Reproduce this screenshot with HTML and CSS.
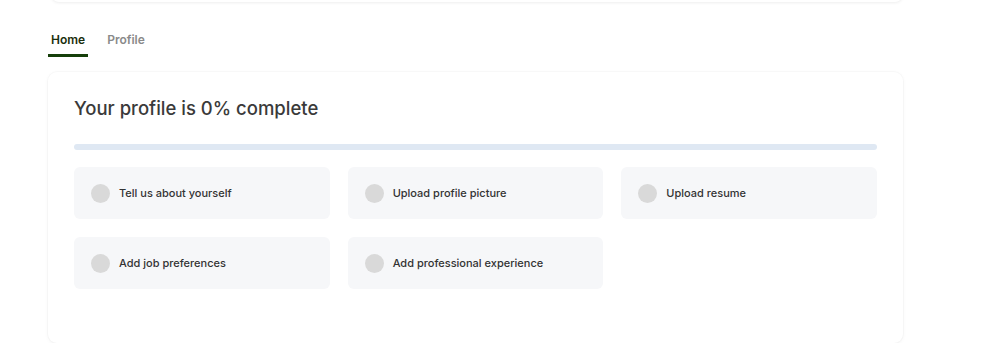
FILE: index.html
```html
<!DOCTYPE html>
<html>
<head>
<meta charset="utf-8">
<link rel="stylesheet" href="styles.css">
</head>
<body>
<div class="page">
  <div class="top-card"></div>
  <nav class="tabs">
    <a class="tab active">Home</a>
    <a class="tab">Profile</a>
  </nav>
  <section class="card">
    <h1 class="title">Your profile is 0% complete</h1>
    <div class="progress"><div class="progress-fill" style="width:0%"></div></div>
    <div class="tasks">
      <div class="task"><span class="dot"></span><span class="label">Tell us about yourself</span></div>
      <div class="task"><span class="dot"></span><span class="label">Upload profile picture</span></div>
      <div class="task"><span class="dot"></span><span class="label">Upload resume</span></div>
      <div class="task"><span class="dot"></span><span class="label">Add job preferences</span></div>
      <div class="task"><span class="dot"></span><span class="label">Add professional experience</span></div>
    </div>
  </section>
</div>
</body>
</html>
```
FILE: styles.css
```css
* { box-sizing: border-box; }
html, body { margin: 0; padding: 0; background: #fff; }
body { font-family: Inter, "Noto Sans", "Liberation Sans", sans-serif; color: #333; }
.page { width: 855px; margin-left: 48px; }
.top-card {
  height: 10px;
  margin-top: -8px;
  margin-left: 3px;
  border-radius: 0 0 8px 8px;
  background: #fff;
  box-shadow: 0 1px 3px rgba(0,0,0,0.07);
}
.tabs { display: flex; gap: 16px; margin-top: 29px; }
.tab {
  display: block;
  padding: 0 3px;
  height: 18px;
  line-height: 18px;
  font-size: 12px;
  font-weight: 600;
  color: #8a8a8a;
  border-bottom: 3px solid transparent;
  box-sizing: content-box;
  padding-bottom: 5px;
}
.tab.active { color: #1a2e0c; border-bottom-color: #163f0a; }
.card {
  margin-top: 15px;
  height: 271px;
  border-radius: 9px;
  background: #fff;
  box-shadow: 0 0 0 1px rgba(0,0,0,0.02), 0 1px 4px rgba(0,0,0,0.045);
  padding: 24px 26px 0 26px;
}
.title {
  margin: 0;
  font-size: 18.5px;
  line-height: 24px;
  font-weight: 500;
  color: #3a3a3a;
}
.progress {
  margin-top: 24px;
  height: 6px;
  border-radius: 3px;
  background: #dfe8f3;
  overflow: hidden;
}
.progress-fill { height: 100%; background: #163f0a; }
.tasks {
  margin-top: 17px;
  display: grid;
  grid-template-columns: repeat(3, 1fr);
  column-gap: 18px;
  row-gap: 18px;
}
.task {
  height: 52px;
  background: #f6f7f9;
  border-radius: 6px;
  display: flex;
  align-items: center;
  padding-left: 17px;
  gap: 9px;
}
.dot { width: 19px; height: 19px; border-radius: 50%; background: #d9d9d9; flex: none; }
.label { font-size: 11px; font-weight: 500; color: #333; }
```
